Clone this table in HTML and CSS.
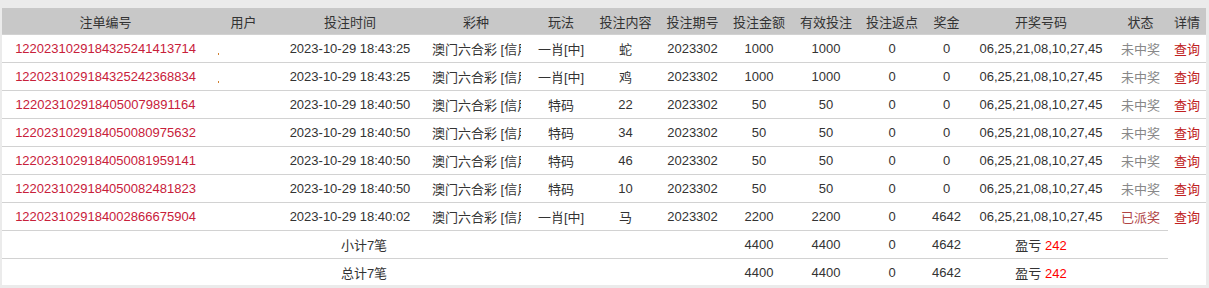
FILE: index.html
```html
<!DOCTYPE html>
<html lang="zh-CN">
<head>
<meta charset="utf-8">
<title>注单列表</title>
<link rel="stylesheet" href="styles.css">
</head>
<body>
<div class="wrap">
<table class="bets">
  <colgroup>
    <col class="c1"><col class="c2"><col class="c3"><col class="c4"><col class="c5"><col class="c6"><col class="c7">
    <col class="c8"><col class="c9"><col class="c10"><col class="c11"><col class="c12"><col class="c13"><col class="c14">
  </colgroup>
  <thead>
    <tr>
      <th>注单编号</th><th>用户</th><th>投注时间</th><th>彩种</th><th>玩法</th><th>投注内容</th><th>投注期号</th>
      <th>投注金额</th><th>有效投注</th><th>投注返点</th><th>奖金</th><th>开奖号码</th><th>状态</th><th>详情</th>
    </tr>
  </thead>
  <tbody>
    <tr>
      <td class="no">1220231029184325241413714</td><td><span class="dot"></span></td><td>2023-10-29 18:43:25</td>
      <td class="lot"><span class="clip">澳门六合彩 [信用]</span></td><td>一肖[中]</td><td>蛇</td><td>2023302</td>
      <td>1000</td><td>1000</td><td>0</td><td>0</td><td>06,25,21,08,10,27,45</td><td class="lose">未中奖</td><td class="link">查询</td>
    </tr>
    <tr>
      <td class="no">1220231029184325242368834</td><td><span class="dot"></span></td><td>2023-10-29 18:43:25</td>
      <td class="lot"><span class="clip">澳门六合彩 [信用]</span></td><td>一肖[中]</td><td>鸡</td><td>2023302</td>
      <td>1000</td><td>1000</td><td>0</td><td>0</td><td>06,25,21,08,10,27,45</td><td class="lose">未中奖</td><td class="link">查询</td>
    </tr>
    <tr>
      <td class="no">1220231029184050079891164</td><td></td><td>2023-10-29 18:40:50</td>
      <td class="lot"><span class="clip">澳门六合彩 [信用]</span></td><td>特码</td><td>22</td><td>2023302</td>
      <td>50</td><td>50</td><td>0</td><td>0</td><td>06,25,21,08,10,27,45</td><td class="lose">未中奖</td><td class="link">查询</td>
    </tr>
    <tr>
      <td class="no">1220231029184050080975632</td><td></td><td>2023-10-29 18:40:50</td>
      <td class="lot"><span class="clip">澳门六合彩 [信用]</span></td><td>特码</td><td>34</td><td>2023302</td>
      <td>50</td><td>50</td><td>0</td><td>0</td><td>06,25,21,08,10,27,45</td><td class="lose">未中奖</td><td class="link">查询</td>
    </tr>
    <tr>
      <td class="no">1220231029184050081959141</td><td></td><td>2023-10-29 18:40:50</td>
      <td class="lot"><span class="clip">澳门六合彩 [信用]</span></td><td>特码</td><td>46</td><td>2023302</td>
      <td>50</td><td>50</td><td>0</td><td>0</td><td>06,25,21,08,10,27,45</td><td class="lose">未中奖</td><td class="link">查询</td>
    </tr>
    <tr>
      <td class="no">1220231029184050082481823</td><td></td><td>2023-10-29 18:40:50</td>
      <td class="lot"><span class="clip">澳门六合彩 [信用]</span></td><td>特码</td><td>10</td><td>2023302</td>
      <td>50</td><td>50</td><td>0</td><td>0</td><td>06,25,21,08,10,27,45</td><td class="lose">未中奖</td><td class="link">查询</td>
    </tr>
    <tr>
      <td class="no">1220231029184002866675904</td><td></td><td>2023-10-29 18:40:02</td>
      <td class="lot"><span class="clip">澳门六合彩 [信用]</span></td><td>一肖[中]</td><td>马</td><td>2023302</td>
      <td>2200</td><td>2200</td><td>0</td><td>4642</td><td>06,25,21,08,10,27,45</td><td class="won">已派奖</td><td class="link">查询</td>
    </tr>
    <tr class="sum">
      <td colspan="7">小计7笔</td><td>4400</td><td>4400</td><td>0</td><td>4642</td><td>盈亏 <span class="pl">242</span></td><td></td>
    </tr>
    <tr class="sum last">
      <td colspan="7">总计7笔</td><td>4400</td><td>4400</td><td>0</td><td>4642</td><td>盈亏 <span class="pl">242</span></td><td></td>
    </tr>
  </tbody>
</table>
</div>
</body>
</html>
```

FILE: styles.css
```css
html, body {
  margin: 0;
  padding: 0;
  background: #ebebeb;
}
body {
  font-family: "Liberation Sans", "Noto Sans CJK SC", sans-serif;
  font-size: 13px;
  color: #333;
}
.wrap {
  padding: 8px 3px 0 2px;
}
.bets {
  width: 1204px;
  border-collapse: collapse;
  table-layout: fixed;
  background: #fff;
}
.c1 { width: 207px; }
.c2 { width: 69px; }
.c3 { width: 144px; }
.c4 { width: 108px; }
.c5 { width: 62px; }
.c6 { width: 67px; }
.c7 { width: 67px; }
.c8 { width: 66px; }
.c9 { width: 68px; }
.c10 { width: 64px; }
.c11 { width: 45px; }
.c12 { width: 144px; }
.c13 { width: 55px; }
.c14 { width: 38px; }

.bets th {
  background: #c8c8c8;
  height: 26px;
  padding: 0;
  font-weight: normal;
  color: #333;
  text-align: center;
  white-space: nowrap;
  overflow: hidden;
}
.bets td {
  height: 27px;
  padding: 0;
  border-top: 1px solid #d2d2d2;
  text-align: center;
  white-space: nowrap;
  overflow: hidden;
}
.bets td.lot {
  padding: 0 9px 0 10px;
}
.clip {
  display: block;
  overflow: hidden;
  white-space: nowrap;
  text-align: left;
}
.bets tr.last td {
  height: 26px;
}
.no { color: #c8203a; }
.lose { color: #888; }
.won { color: #b04444; }
.link { color: #c02020; }
.pl { color: #ff0000; }
.dot {
  display: inline-block;
  width: 1px;
  height: 2px;
  background: #d08030;
  margin-right: 50px;
  vertical-align: -2px;
}
```
